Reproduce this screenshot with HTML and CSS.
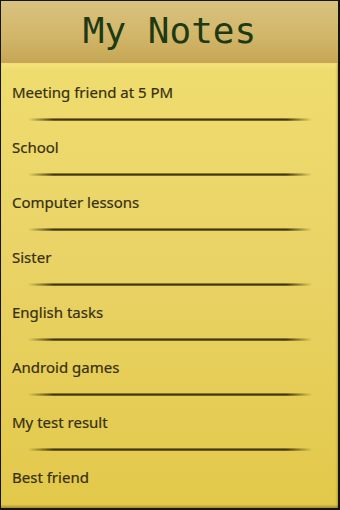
FILE: index.html
```html
<!DOCTYPE html>
<html>
<head>
<meta charset="utf-8">
<link rel="stylesheet" href="styles.css">
</head>
<body>
<div class="frame">
  <div class="header"><h1 class="title">My Notes</h1></div>
  <ul class="notes">
    <li class="note"><span class="label">Meeting friend at 5 PM</span><div class="rule"></div></li>
    <li class="note"><span class="label">School</span><div class="rule"></div></li>
    <li class="note"><span class="label">Computer lessons</span><div class="rule"></div></li>
    <li class="note"><span class="label">Sister</span><div class="rule"></div></li>
    <li class="note"><span class="label">English tasks</span><div class="rule"></div></li>
    <li class="note"><span class="label">Android games</span><div class="rule"></div></li>
    <li class="note"><span class="label">My test result</span><div class="rule"></div></li>
    <li class="note"><span class="label">Best friend</span></li>
  </ul>
</div>
</body>
</html>
```
FILE: styles.css
```css
html, body {
  margin: 0;
  padding: 0;
  background: #151510;
  width: 340px;
  height: 510px;
  overflow: hidden;
}
.frame {
  box-sizing: border-box;
  width: 340px;
  height: 510px;
  padding: 1px 2px 2px 1px;
  display: flex;
  flex-direction: column;
}
.header {
  height: 62px;
  flex: none;
  background: linear-gradient(to bottom, #d9c27e 0%, #d3b86c 50%, #c6a656 100%);
  display: flex;
  align-items: center;
  justify-content: center;
}
.title {
  margin: 0;
  font-family: "DejaVu Sans Mono", monospace;
  font-weight: normal;
  font-size: 36px;
  color: #1e3a12;
  line-height: 1;
  padding-bottom: 3px;
}
.notes {
  flex: 1;
  list-style: none;
  margin: 0;
  padding: 3px 0 0;
  background: linear-gradient(to bottom, #f4e47c 0px, #efdc6e 8px, #ead468 40%, #e2c84a 100%);
  box-shadow: inset 0 -3px 2px -1px rgba(120, 100, 20, 0.5), inset -2px 0 2px -1px rgba(120,100,20,0.4);
  overflow: hidden;
}
.note {
  padding: 16px 0 0 11px;
  height: 39px;
}
.label {
  display: block;
  font-family: "Noto Sans", "Open Sans", sans-serif;
  font-size: 15px;
  line-height: 20px;
  color: #363010;
  -webkit-text-stroke: 0.2px #363010;
}
.rule {
  margin: 16px 0 0 16px;
  width: 284px;
  height: 3px;
  background: linear-gradient(to bottom, rgba(90, 75, 10, 0.35) 0%, #3a3006 45%, rgba(60, 48, 6, 0.55) 100%);
  -webkit-mask-image: linear-gradient(to right, transparent 0%, #000 9%, #000 91%, transparent 100%);
  mask-image: linear-gradient(to right, transparent 0%, #000 9%, #000 91%, transparent 100%);
}
```
